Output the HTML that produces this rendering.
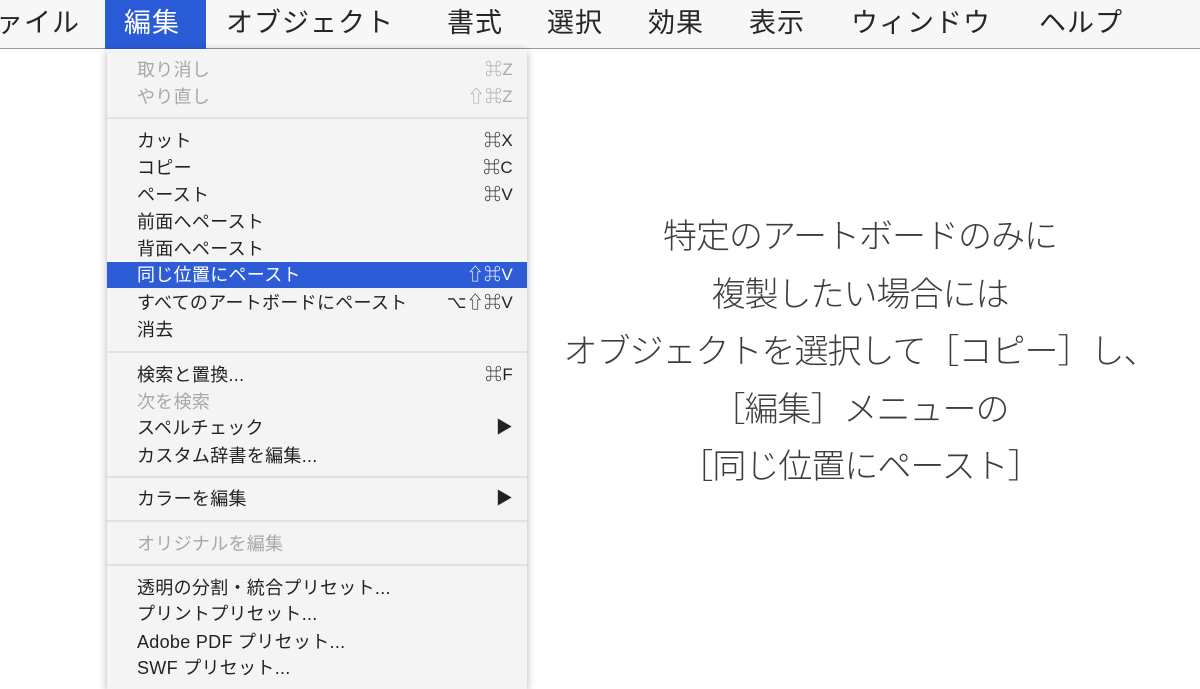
<!DOCTYPE html>
<html><head><meta charset="utf-8"><style>
*{margin:0;padding:0;box-sizing:border-box}
body{width:1200px;height:675px;overflow:hidden;background:#fff;font-family:"Liberation Sans","Noto Sans CJK JP",sans-serif;position:relative}
.bar{position:absolute;left:0;top:0;width:1200px;height:49px;background:#f7f7f7;border-bottom:1px solid #9a9a9a}
.bar span{position:absolute;top:6px;font-size:27px;color:#262626;line-height:34px;letter-spacing:1px}
.sel{position:absolute;left:105px;top:0;width:101px;height:49px;background:#2a5bd7}
.menu{position:absolute;left:107px;top:49px;width:420px;height:640px;background:#f4f4f4;box-shadow:0 2px 8px rgba(0,0,0,.3)}
.it{position:absolute;left:0;width:420px;height:26px;font-size:18px;line-height:26px;color:#222;padding-left:30px;letter-spacing:0.3px}
.it b{position:absolute;right:14px;top:0;font-weight:normal;font-size:17px}
.dis{color:#a8a8a8}
.hl{background:#2d5cd6;color:#fff}
.sep{position:absolute;left:0;width:420px;height:2px;background:#e2e2e2}
.txt{position:absolute;left:560px;width:600px;top:205px;text-align:center;font-size:34px;line-height:57.5px;color:#3d3d3d;font-family:"Noto Sans CJK JP",sans-serif;font-weight:300;letter-spacing:-1px}
</style></head><body>
<div class="bar"><div class="sel"></div>
<span style="left:-4px">ァイル</span>
<span style="left:124px;color:#fff">編集</span>
<span style="left:226px">オブジェクト</span>
<span style="left:447px">書式</span>
<span style="left:547px">選択</span>
<span style="left:648px">効果</span>
<span style="left:749px">表示</span>
<span style="left:851px">ウィンドウ</span>
<span style="left:1039px">ヘルプ</span>
</div>
<div class="menu">
<div class="it dis" style="top:8px">取り消し<b>⌘Z</b></div>
<div class="it dis" style="top:35px">やり直し<b>⇧⌘Z</b></div>
<div class="sep" style="top:68px"></div>
<div class="it" style="top:79px">カット<b>⌘X</b></div>
<div class="it" style="top:106px">コピー<b>⌘C</b></div>
<div class="it" style="top:133px">ペースト<b>⌘V</b></div>
<div class="it" style="top:160px">前面へペースト</div>
<div class="it" style="top:187px">背面へペースト</div>
<div class="it hl" style="top:213px">同じ位置にペースト<b>⇧⌘V</b></div>
<div class="it" style="top:241px">すべてのアートボードにペースト<b>⌥⇧⌘V</b></div>
<div class="it" style="top:268px">消去</div>
<div class="sep" style="top:302px"></div>
<div class="it" style="top:313px">検索と置換...<b>⌘F</b></div>
<div class="it dis" style="top:340px">次を検索</div>
<div class="it" style="top:366px">スペルチェック<b>▶</b></div>
<div class="it" style="top:394px">カスタム辞書を編集...</div>
<div class="sep" style="top:427px"></div>
<div class="it" style="top:437px">カラーを編集<b>▶</b></div>
<div class="sep" style="top:471px"></div>
<div class="it dis" style="top:482px">オリジナルを編集</div>
<div class="sep" style="top:515px"></div>
<div class="it" style="top:526px">透明の分割・統合プリセット...</div>
<div class="it" style="top:552px">プリントプリセット...</div>
<div class="it" style="top:580px">Adobe PDF プリセット...</div>
<div class="it" style="top:606px">SWF プリセット...</div>
</div>
<div class="txt">特定のアートボードのみに<br>複製したい場合には<br>オブジェクトを選択して［コピー］し、<br>［編集］メニューの<br>［同じ位置にペースト］</div>
</body></html>
